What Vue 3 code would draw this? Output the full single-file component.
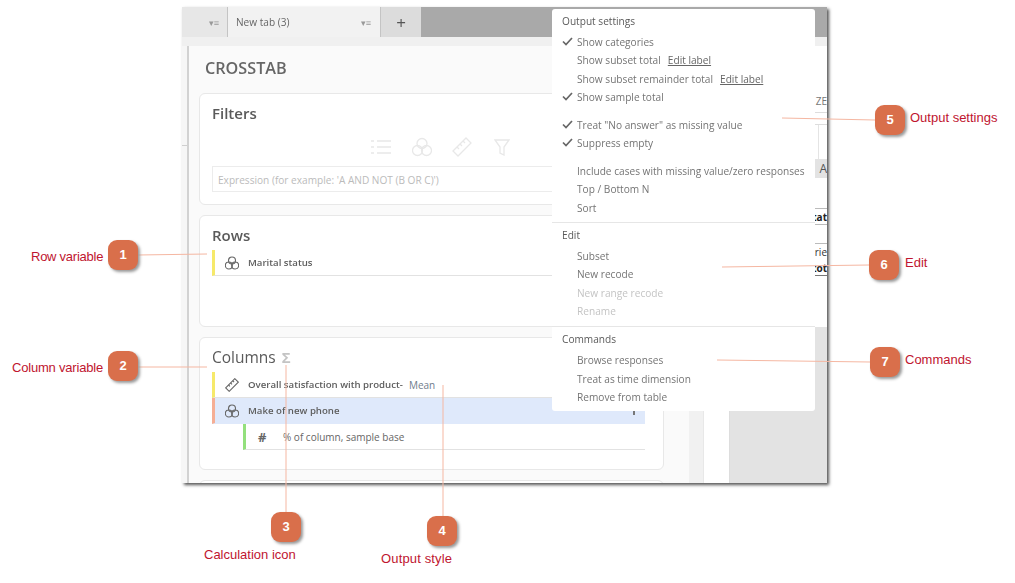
<script setup>
const outputGroups = [
  [
    { label: 'Show categories', checked: true },
    { label: 'Show subset total', link: 'Edit label' },
    { label: 'Show subset remainder total', link: 'Edit label' },
    { label: 'Show sample total', checked: true }
  ],
  [
    { label: 'Treat "No answer" as missing value', checked: true },
    { label: 'Suppress empty', checked: true }
  ],
  [
    { label: 'Include cases with missing value/zero responses' },
    { label: 'Top / Bottom N' },
    { label: 'Sort' }
  ]
]
const editItems = [
  { label: 'Subset' },
  { label: 'New recode' },
  { label: 'New range recode', disabled: true },
  { label: 'Rename', disabled: true }
]
const commandItems = ['Browse responses', 'Treat as time dimension', 'Remove from table']
const callouts = [
  { n: 1, x: 108, y: 240 },
  { n: 2, x: 108, y: 351 },
  { n: 3, x: 271, y: 512 },
  { n: 4, x: 427, y: 516 },
  { n: 5, x: 875, y: 105 },
  { n: 6, x: 869, y: 250 },
  { n: 7, x: 870, y: 347 }
]
const labels = [
  { t: 'Row variable', x: 31, y: 250, track: -0.25 },
  { t: 'Column variable', x: 12, y: 361, track: -0.2 },
  { t: 'Calculation icon', x: 204, y: 548, track: 0 },
  { t: 'Output style', x: 381, y: 552, track: 0.15 },
  { t: 'Output settings', x: 910, y: 111, track: 0 },
  { t: 'Edit', x: 905, y: 256, track: 0 },
  { t: 'Commands', x: 905, y: 353, track: 0 }
]
const lines = [
  [138, 255, 207, 254],
  [138, 367, 207, 367],
  [286, 512, 286, 365],
  [443, 516, 443, 385],
  [875, 120, 782, 118],
  [869, 265, 722, 267],
  [870, 362, 717, 360]
]
</script>

<template>
  <div class="page">
    <div class="window">
      <div class="tabbar">
        <div class="tab tab-first"><span class="tab-menu">▾≡</span></div>
        <div class="tab tab-active"><span>New tab (3)</span><span class="tab-menu">▾≡</span></div>
        <div class="tab tab-add">+</div>
      </div>
      <div class="band"></div>
      <div class="body">
        <div class="strip"><div class="strip-line"></div></div>
        <div class="panel">
          <h1 class="title">CROSSTAB</h1>

          <section class="card card-filters">
            <h2>Filters</h2>
            <div class="filter-icons">
              <svg width="22" height="18" viewBox="0 0 22 18" fill="none" stroke="#e8e8e8" stroke-width="1.3">
                <path d="M1 3h3M7 3h14M1 9h3M7 9h14M1 15h3M7 15h14" />
              </svg>
              <svg width="20" height="20" viewBox="0 0 20 20" fill="none" stroke="#e8e8e8" stroke-width="1.3">
                <circle cx="10" cy="6.5" r="5" /><circle cx="5.5" cy="13.5" r="5" /><circle cx="14.5" cy="13.5" r="5" />
              </svg>
              <svg width="20" height="20" viewBox="0 0 20 20" fill="none" stroke="#e8e8e8" stroke-width="1.3">
                <path d="M1 14 14 1l5 5L6 19z" /><path d="M5 10l2 2M8 7l2 2M11 4l2 2" />
              </svg>
              <svg class="filter-funnel" width="16" height="17" viewBox="0 0 16 17" fill="none" stroke="#e8e8e8" stroke-width="1.3">
                <path d="M1 1h14L10 8v8l-4-2V8z" />
              </svg>
            </div>
            <div class="expr">Expression (for example: 'A AND NOT (B OR C)')</div>
          </section>

          <section class="card card-rows">
            <h2>Rows</h2>
            <div class="var var-yellow">
              <svg class="var-icon" width="14" height="14" viewBox="0 0 20 20" fill="none" stroke="#666" stroke-width="1.6">
                <circle cx="10" cy="6.5" r="5" /><circle cx="5.5" cy="13.5" r="5" /><circle cx="14.5" cy="13.5" r="5" />
              </svg>
              <span class="var-name">Marital status</span>
            </div>
          </section>

          <section class="card card-cols">
            <h2>Columns <span class="sigma">Σ</span></h2>
            <div class="var var-yellow">
              <svg class="var-icon" width="14" height="14" viewBox="0 0 20 20" fill="none" stroke="#666" stroke-width="1.6">
                <path d="M1 14 14 1l5 5L6 19z" /><path d="M5 10l2 2M8 7l2 2M11 4l2 2" />
              </svg>
              <span class="var-name">Overall satisfaction with product-</span>
              <span class="var-style">Mean</span>
            </div>
            <div class="var var-salmon">
              <svg class="var-icon" width="14" height="14" viewBox="0 0 20 20" fill="none" stroke="#666" stroke-width="1.6">
                <circle cx="10" cy="6.5" r="5" /><circle cx="5.5" cy="13.5" r="5" /><circle cx="14.5" cy="13.5" r="5" />
              </svg>
              <span class="var-name">Make of new phone</span>
              <svg class="mini-funnel" width="6" height="7" viewBox="0 0 6 7"><path d="M0 0h6L4 3v4H2V3z" fill="#777" /></svg>
            </div>
            <div class="var var-green">
              <span class="hash">#</span>
              <span class="var-sub">% of column, sample base</span>
            </div>
          </section>

          <section class="card card-next"></section>
        </div>

        <div class="gutter"></div>

        <div class="side">
          <div class="side-white"></div>
          <div class="side-table">
            <div class="cell cell-ze">ZE</div>
            <div class="cell cell-empty"></div>
            <div class="cell cell-a">A</div>
            <div class="cell cell-tat">tat</div>
            <div class="cell cell-rie">rie</div>
            <div class="cell cell-tot">tot</div>
            <div class="cell-fill"></div>
          </div>
        </div>
      </div>
    </div>

    <div class="menu">
      <div class="menu-section menu-output">
        <div class="menu-head">Output settings</div>
        <div v-for="(group, gi) in outputGroups" :key="gi" class="menu-group">
          <div v-for="item in group" :key="item.label" class="menu-item">
            <svg v-if="item.checked" class="check" width="11" height="9" viewBox="0 0 11 9" fill="none" stroke="#666" stroke-width="1.7">
              <path d="M1 4.5 4 7.5 10 1" />
            </svg>
            <span>{{ item.label }}</span>
            <a v-if="item.link" class="menu-link">{{ item.link }}</a>
          </div>
        </div>
      </div>
      <div class="menu-section menu-edit">
        <div class="menu-head">Edit</div>
        <div v-for="item in editItems" :key="item.label" class="menu-item" :class="{ disabled: item.disabled }">
          <span>{{ item.label }}</span>
        </div>
      </div>
      <div class="menu-section menu-commands">
        <div class="menu-head">Commands</div>
        <div v-for="item in commandItems" :key="item" class="menu-item"><span>{{ item }}</span></div>
      </div>
    </div>

    <svg class="leaders" width="1015" height="583">
      <line v-for="(l, i) in lines" :key="i" :x1="l[0]" :y1="l[1]" :x2="l[2]" :y2="l[3]" />
    </svg>
    <div v-for="c in callouts" :key="c.n" class="badge" :style="{ left: c.x + 'px', top: c.y + 'px' }">{{ c.n }}</div>
    <div v-for="l in labels" :key="l.t" class="note" :style="{ left: l.x + 'px', top: l.y + 'px', letterSpacing: l.track + 'px' }">{{ l.t }}</div>
  </div>
</template>

<style>
html, body { margin: 0; background: #fff; }
</style>

<style scoped>
.page {
  position: relative;
  width: 1015px;
  height: 583px;
  overflow: hidden;
  background: #fff;
  font-family: "Open Sans", sans-serif;
  color: #666;
}
.window {
  position: absolute;
  left: 182px;
  top: 7px;
  width: 645px;
  height: 476px;
  display: flex;
  flex-direction: column;
  overflow: hidden;
  background: #f4f4f4;
  box-shadow: 2px 2px 3px #555;
}
.tabbar {
  display: flex;
  height: 30px;
  flex: none;
  background: #a9a9a9;
}
.tab {
  display: flex;
  align-items: center;
  font-size: 10.1px;
  color: #666;
  box-sizing: border-box;
  filter: blur(0.3px);
}
.tab-menu { font-size: 9px; color: #999; letter-spacing: 0; }
.tab-first { width: 46px; background: #e7e7e7; justify-content: flex-end; padding-right: 8px; border-right: 1px solid #c4c4c4; }
.tab-active { width: 153px; background: #f2f2f2; justify-content: space-between; padding: 0 9px 0 8px; border-right: 1px solid #c4c4c4; }
.tab-add { width: 40px; background: #dcdcdc; justify-content: center; font-size: 17px; color: #555; }
.band { height: 9px; flex: none; background: #f0f0f0; }
.body { flex: 1; display: flex; min-height: 0; }
.strip {
  width: 5px;
  flex: none;
  background: #f6f6f6;
  border-right: 2px solid #d2d2d2;
  box-sizing: content-box;
  padding-top: 99px;
}
.strip-line { height: 1px; background: #cfcfcf; }
.panel {
  width: 500px;
  flex: none;
  box-sizing: border-box;
  padding: 0 25px 0 10px;
  background: #fafafa;
}
.title {
  margin: 0;
  padding: 11px 0 0 6px;
  height: 47px;
  box-sizing: border-box;
  font-size: 16.2px;
  line-height: 22px;
  font-weight: 600;
  color: #666;
  filter: blur(0.3px);
}
.card {
  box-sizing: border-box;
  background: #fff;
  border: 1px solid #e8e8e8;
  border-radius: 6px;
  padding: 9px 18px 0 12px;
  margin-bottom: 10px;
}
.card h2 {
  margin: 0;
  font-size: 15px;
  line-height: 20px;
  font-weight: 600;
  color: #5a5a5a;
  filter: blur(0.3px);
}
.card-filters { height: 112px; }
.card-rows { height: 112px; }
.card-cols { height: 133px; }
.card-cols h2 { font-size: 15.5px; font-weight: 500; margin-bottom: 5px; }
.card-next { height: 30px; }
.filter-icons {
  display: flex;
  align-items: center;
  gap: 20px;
  height: 20px;
  margin: 14px 0 9px 158px;
}
.filter-funnel { margin-left: 2px; }
.expr {
  height: 26px;
  box-sizing: border-box;
  border: 1px solid #ececec;
  padding-left: 5px;
  font-size: 10.1px;
  line-height: 26px;
  color: #bbb;
}
.var {
  display: flex;
  align-items: center;
  height: 26px;
  box-sizing: border-box;
  border-left: 3px solid #f6e96a;
  border-bottom: 1px solid #e2e2e2;
  font-size: 10px;
}
.card-rows .var { margin-top: 5px; }
.var-icon { margin-left: 10px; margin-right: 9px; flex: none; }
.var-name { font-size: 9.65px; font-weight: 600; color: #5d5d5d; filter: blur(0.25px); }
.var-style { margin-left: 6px; color: #6f7d8c; }
.var-salmon { position: relative; background: #dfe9fb; border-left-color: #f5ae95; border-bottom-color: #dfe9fb; }
.mini-funnel { position: absolute; right: 8px; top: 10px; }
.var-green { margin-left: 31px; border-left-color: #93e07d; }
.hash { width: 37px; padding-left: 12px; box-sizing: border-box; font-size: 13px; font-weight: 700; color: #666; flex: none; }
.var-sub { color: #666; }
.sigma { color: #c4c4c4; font-size: 15px; font-weight: 700; margin-left: 2px; }
.gutter { width: 14px; flex: none; background: #f1f1f1; }
.side { flex: 1; display: flex; min-width: 0; }
.side-white { width: 25px; flex: none; background: #fff; border-left: 1px solid #e8e8e8; }
.side-table { flex: 1; background: #fff; display: flex; flex-direction: column; border-left: 1px solid #ddd; font-size: 10px; min-width: 0; overflow: hidden; }
.cell { display: flex; align-items: center; justify-content: flex-end; box-sizing: border-box; color: #333; font-size: 10px; overflow: hidden; flex: none; }
.cell-ze { height: 23px; margin-top: 44px; border-bottom: 1px solid #ddd; color: #777; }
.cell-empty {
  height: 35px;
  margin-top: 11px;
  border-top: 1px solid #ddd;
  background: linear-gradient(#e4e4e4, #e4e4e4) no-repeat 88px 0 / 1px 100%;
}
.cell-a { height: 19px; background: #e3e3e3; font-size: 12px; color: #555; }
.cell-tat { height: 17px; margin-top: 30px; border-top: 1px solid #bbb; border-bottom: 1px solid #bbb; font-weight: 700; color: #222; }
.cell-rie { height: 17px; margin-top: 18px; border-top: 1px solid #bbb; }
.cell-tot { height: 16px; border-bottom: 1px solid #777; font-weight: 700; color: #222; }
.cell-fill { flex: 1; margin-top: 51px; background: #e3e3e3; }

.menu {
  position: absolute;
  left: 552px;
  top: 9px;
  width: 263px;
  height: 402px;
  box-sizing: border-box;
  background: #fff;
  border-radius: 3px;
  font-size: 10.13px;
  color: #747474;
}
.menu-section { padding-left: 10px; box-sizing: border-box; }
.menu-output { height: 213px; padding-top: 3px; }
.menu-edit { height: 104px; padding-top: 3px; border-top: 1px solid #e6e6e6; }
.menu-commands { padding-top: 3.3px; border-top: 1px solid #e6e6e6; }
.menu-head { height: 18px; line-height: 18px; margin-bottom: 3px; color: #5a5a5a; font-weight: 500; filter: blur(0.25px); }
.menu-group { margin-bottom: 9.2px; }
.menu-item {
  position: relative;
  height: 18.4px;
  line-height: 18px;
  padding-left: 15px;
  white-space: nowrap;
  filter: blur(0.25px);
}
.menu-item.disabled { color: #c4c4c4; }
.check { position: absolute; left: 0; top: 4px; }
.menu-link { margin-left: 7px; color: #666; text-decoration: underline; }

.leaders { position: absolute; left: 0; top: 0; pointer-events: none; }
.leaders line { stroke: #f5b7a2; stroke-width: 1; }
.badge {
  position: absolute;
  width: 30px;
  height: 30px;
  border-radius: 9px;
  background: #d96f4b;
  box-shadow: 2px 2px 3px #999;
  color: #fff;
  font: 700 13px/30px "Liberation Sans", sans-serif;
  text-align: center;
}
.note {
  position: absolute;
  color: #c0152f;
  font: 13px/14px "Liberation Sans", sans-serif;
  white-space: nowrap;
}
</style>
